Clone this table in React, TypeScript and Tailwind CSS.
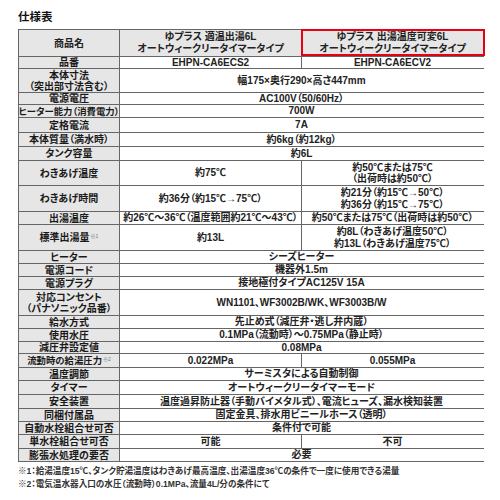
import type { ReactNode } from "react";

type Spec = {
  label: ReactNode;
  a: ReactNode;
  b?: ReactNode;
  h: string;
  tight?: boolean;
};

const Note = ({ n }: { n: string }) => (
  <span className="relative top-[-3px] ml-[1px] text-[5px] leading-none font-medium text-[#777]">※{n}</span>
);

const specs: Spec[] = [
  { label: "品番", a: "EHPN-CA6ECS2", b: "EHPN-CA6ECV2", h: "h-[12px]" },
  {
    label: (
      <>
        本体寸法
        <br />
        （突出部寸法含む）
      </>
    ),
    a: "幅175×奥行290×高さ447mm",
    h: "h-[24px]",
  },
  { label: "電源電圧", a: "AC100V（50/60Hz）", h: "h-[12px]" },
  { label: "ヒーター能力（消費電力）", a: "700W", h: "h-[13px]", tight: true },
  { label: "定格電流", a: "7A", h: "h-[15px]" },
  { label: "本体質量（満水時）", a: "約6kg（約12kg）", h: "h-[14px]" },
  { label: "タンク容量", a: "約6L", h: "h-[14px]" },
  {
    label: "わきあげ温度",
    a: "約75℃",
    b: (
      <>
        約50℃または75℃
        <br />
        （出荷時は約50℃）
      </>
    ),
    h: "h-[25px]",
  },
  {
    label: "わきあげ時間",
    a: "約36分（約15℃→75℃）",
    b: (
      <>
        約21分（約15℃→50℃）
        <br />
        約36分（約15℃→75℃）
      </>
    ),
    h: "h-[26px]",
  },
  {
    label: "出湯温度",
    a: "約26℃～36℃（温度範囲約21℃～43℃）",
    b: "約50℃または75℃（出荷時は約50℃）",
    h: "h-[13px]",
  },
  {
    label: (
      <>
        標準出湯量
        <Note n="1" />
      </>
    ),
    a: "約13L",
    b: (
      <>
        約8L（わきあげ温度50℃）
        <br />
        約13L（わきあげ温度75℃）
      </>
    ),
    h: "h-[26px]",
  },
  { label: "ヒーター", a: "シーズヒーター", h: "h-[13px]" },
  { label: "電源コード", a: "機器外1.5m", h: "h-[13px]" },
  { label: "電源プラグ", a: "接地極付タイプAC125V 15A", h: "h-[13px]" },
  {
    label: (
      <>
        対応コンセント
        <br />
        （パナソニック品番）
      </>
    ),
    a: "WN1101、WF3002B/WK、WF3003B/W",
    h: "h-[26px]",
  },
  { label: "給水方式", a: "先止め式（減圧弁・逃し弁内蔵）", h: "h-[13px]" },
  { label: "使用水圧", a: "0.1MPa（流動時）～0.75MPa（静止時）", h: "h-[13px]" },
  { label: "減圧弁設定値", a: "0.08MPa", h: "h-[12px]" },
  {
    label: (
      <>
        流動時の給湯圧力
        <Note n="2" />
      </>
    ),
    a: "0.022MPa",
    b: "0.055MPa",
    h: "h-[14px]",
    tight: true,
  },
  { label: "温度調節", a: "サーミスタによる自動制御", h: "h-[13px]" },
  { label: "タイマー", a: "オートウィークリータイマーモード", h: "h-[14px]" },
  {
    label: "安全装置",
    a: "温度過昇防止器（手動バイメタル式）、電流ヒューズ、漏水検知装置",
    h: "h-[14px]",
  },
  { label: "同梱付属品", a: "固定金具、排水用ビニールホース（透明）", h: "h-[13px]" },
  { label: "自動水栓組合せ可否", a: "条件付で可能", h: "h-[13px]" },
  { label: "単水栓組合せ可否", a: "可能", b: "不可", h: "h-[14px]" },
  { label: "膨張水処理の要否", a: "必要", h: "h-[13px]" },
];

function SpecRow({ s }: { s: Spec }) {
  return (
    <div className={`grid grid-cols-[101px_182px_181px] grid-rows-[100%] border-b border-[#666] ${s.h}`}>
      <div
        className={`flex items-center justify-center border-r border-[#666] bg-[#e6e6e6] text-center leading-[11px] font-bold whitespace-nowrap text-[#1a1a1a] ${
          s.tight ? "text-[9.4px]" : "text-[10px]"
        }`}
      >
        <span>{s.label}</span>
      </div>
      {s.b === undefined ? (
        <div className="col-span-2 flex items-center justify-center text-center leading-[11.5px] whitespace-nowrap">
          {s.a}
        </div>
      ) : (
        <>
          <div className="flex items-center justify-center border-r border-[#666] text-center leading-[11.5px] whitespace-nowrap">
            {s.a}
          </div>
          <div className="flex items-center justify-center text-center leading-[11.5px] whitespace-nowrap">
            {s.b}
          </div>
        </>
      )}
    </div>
  );
}

export default function App() {
  return (
    <main className="min-h-[500px] w-[500px] bg-white pt-[9px] pl-[18px] font-['Liberation_Sans','Noto_Sans_CJK_JP',sans-serif] text-[#222] [font-feature-settings:'palt']">
      <h2 className="mb-[4px] text-[11.5px] leading-[16px] font-bold text-[#111]">仕様表</h2>

      {/* Spec table */}
      <div className="relative w-[466px] border-t border-l border-[#666] text-[10px] font-semibold">
        <div className="grid h-[27px] grid-cols-[101px_182px_181px] grid-rows-[100%] border-b border-[#666] bg-[#e6e6e6]">
          <div className="flex items-center justify-center border-r border-[#666] font-bold">商品名</div>
          <div className="flex items-center justify-center border-r border-[#666] text-center leading-[12px]">
            ゆプラス 適温出湯6L
            <br />
            オートウィークリータイマータイプ
          </div>
          <div className="flex items-center justify-center text-center leading-[12px]">
            ゆプラス 出湯温度可変6L
            <br />
            オートウィークリータイマータイプ
          </div>
        </div>
        {specs.map((s, i) => (
          <SpecRow key={i} s={s} />
        ))}

        {/* highlight box */}
        <div className="absolute top-[-1px] left-[282px] h-[27px] w-[184px] border-2 border-[#e60012]" />
      </div>

      <div className="mt-[3px] text-[8.6px] leading-[13px] font-semibold text-[#333]">
        <p>※1：給湯温度15℃、タンク貯湯温度はわきあげ最高温度、出湯温度36℃の条件で一度に使用できる湯量</p>
        <p>※2：電気温水器入口の水圧（流動時）0.1MPa、流量4L/分の条件にて</p>
      </div>
    </main>
  );
}
